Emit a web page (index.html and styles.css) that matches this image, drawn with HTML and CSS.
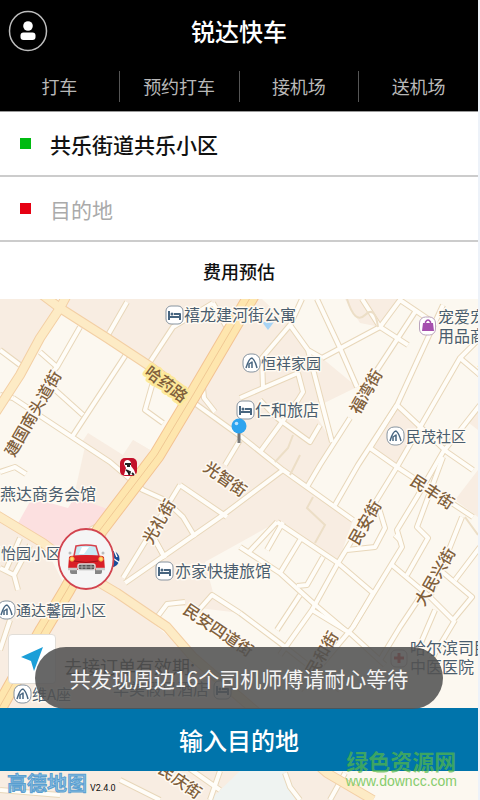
FILE: index.html
```
<!DOCTYPE html>
<html lang="zh-CN">
<head>
    <meta charset="UTF-8">
    <meta name="viewport" content="width=device-width, initial-scale=1.0">
    <title>锐达快车</title>
    <link rel="stylesheet" href="styles.css">
</head>
<body>
    <div class="app">
        <header class="header">
            <div class="title-bar">
                <button class="profile" aria-label="个人中心">
                    <svg width="40" height="42" viewBox="0 0 40 42">
                        <ellipse cx="20" cy="21" rx="18.500" ry="19.500" fill="none" stroke="#bdbdbd" stroke-width="1.500"/>
                        <circle cx="20" cy="16" r="4.800" fill="#fff"/>
                        <rect x="12.500" y="22.500" width="15" height="7.500" rx="3" fill="#fff"/>
                    </svg>
                </button>
                <h1>锐达快车</h1>
            </div>
            <nav class="tabs">
                <button>打车</button>
                <button>预约打车</button>
                <button>接机场</button>
                <button>送机场</button>
            </nav>
        </header>

        <form class="trip">
            <div class="field">
                <label class="dot start" for="from" aria-label="出发地"></label>
                <input id="from" type="text" value="共乐街道共乐小区">
            </div>
            <div class="field">
                <label class="dot end" for="to" aria-label="目的地"></label>
                <input id="to" type="text" placeholder="目的地">
            </div>
            <button type="button" class="estimate">费用预估</button>
        </form>

        <main class="map">
            <svg class="map-canvas" viewBox="0 299 478 501" preserveAspectRatio="xMinYMin slice">
                <defs>
                    <g id="streets">
                        <path d="M0 350 20 365M80 327 57 367 40 352M57 367 50 375M127 302 108 335M213 303 173 327 150 362M213 303 227 328"/>
                        <path d="M127 353 72 437M53 388 83 415M13 398 72 437 110 462 143 490 165 500 183 517 195 537M153 382 145 410 163 423"/>
                        <path d="M193 402 243 438 283 470 353 520M203 388 204 398 215 412"/>
                        <path d="M317 299 340 348 357 387M302 299 290 325 262 358 263 388 298 373M290 325 308 350 332 442M322 358 380 327 408 345M322 358 308 350"/>
                        <path d="M362 299 380 327 400 300 437 325M415 312 377 370M350 418 320 465 307 487M443 305 397 405 358 465 335 505"/>
                        <path d="M480 338 460 358 423 422 397 467 338 563 312 610 280 655M397 405 447 452 473 470M370 448 397 467 473 517"/>
                        <path d="M460 358 480 375M480 405 443 452 417 497 397 530 402 547 353 627 300 690M370 448 397 405"/>
                        <path d="M240 398 263 388M260 452 298 400 303 392 298 373M277 418 310 442 320 425M277 418 260 400"/>
                        <path d="M283 470 223 515 125 583M180 485 227 517M180 485 123 578M155 540 165 558M130 480 143 490"/>
                        <path d="M240 547 280 573 313 603 345 630M277 522 338 563 373 593 353 627M277 522 248 553M300 540 280 573M323 557 307 585 297 586"/>
                        <path d="M378 505 385 528 375 547 347 550M443 457 417 527 428 538 407 575M392 565 430 597 453 620 472 597 440 570"/>
                        <path d="M462 517 430 597M480 547 455 580M420 597 400 627 380 660M240 613 280 643 340 690M300 595 277 630M312 610 350 633 385 665"/>
                        <path d="M155 620 167 604 185 602M197 612 212 595 240 613M435 610 420 645M455 620 425 670M283 522 267 550"/>
                        <path d="M10 620 0 650M0 568 14 575 18 590M5 572 20 538M14 575 30 545M0 472 15 467 26 474M90 530 105 522"/>
                        <path d="M220 771 210 800M170 755 220 790M345 773 330 800M0 790 60 795M120 780 160 800M285 773 290 787 300 800"/>
                        <path d="M240 440 225 465M0 395 13 398M400 540 395 535M165 558 155 540"/>
                    </g>
                    <g id="avenues">
                        <path d="M40 293 60 308 107 338 148 365 190 396"/>
                        <path d="M-4 412 20 375 40 338 60 308 68 293"/>
                        <path d="M-5 514 43 543 83 573 117 593 167 627 193 657 327 773 373 800"/>
                    </g>
                    <path id="expressway" d="M253 293 193 395 157 455 100 530 67 590 43 630 -5 715"/>
                    <g id="pin-home">
                        <rect x="-8" y="-9" width="17" height="18" rx="7" fill="#fff" stroke="#8794a0"/>
                        <path d="M-5 5Q-2-5 1-5Q4-3 6 5M-2 5V1L1-1V5" fill="none" stroke="#476580" stroke-width="1.500"/>
                    </g>
                    <g id="pin-hotel">
                        <rect x="-8" y="-9" width="17" height="18" rx="5" fill="#fff" stroke="#8794a0"/>
                        <path d="M-5-4V5M-5 2H6V5M6 2V-1H0" fill="none" stroke="#476580" stroke-width="2"/>
                        <circle cx="-2" cy="-1" r="1.500" fill="#476580"/>
                    </g>
                </defs>

                <rect y="299" width="478" height="501" fill="#fcf8f0"/>

                <!-- city blocks -->
                <g fill="#f8ede2">
                    <path d="M0 299H50L55 310 22 365 0 352Z"/>
                    <path d="M68 299H262L290 325 308 350 322 358 357 387 312 409 332 442 307 487 353 520 338 563 277 522 205 562 215 600 240 613 167 604 155 620 120 595 67 590 160 455 193 395 60 308Z"/>
                    <path d="M345 299H398L380 327 360 323Z"/>
                    <path d="M397 405 421 423 395 463 372 448ZM478 470 455 500 478 517ZM385 450H405L397 466Z"/>
                    <path d="M88 433 123 455 133 440 150 450 100 530 72 505Z"/>
                    <path d="M0 515 43 543 67 590 117 593 193 657 310 760 373 800H0Z"/>
                    <path d="M478 405 465 420 478 430Z"/>
                </g>
                <path d="M263 299H300L290 325Z" fill="#fcf8f0"/>
                <path d="M193 402 150 362 107 338 60 308 72 437 120 460 133 440 157 450Z" fill="#fcf8f0"/>
                <path d="M88 433 123 455 133 440 150 450 145 465 110 462 80 445Z" fill="#f8ede2"/>
                <path d="M17 525 32 498 68 508 75 497 110 510 85 550 60 553Z" fill="#fce0e0"/>
                <path d="M240 771H284L293 785 295 800H210Z" fill="#eff3f1"/>

                <use href="#streets" class="street-edge"/>
                <use href="#streets" class="street"/>
                <path class="footpath" d="M347 299Q355 325 365 315T378 327M313 497 307 508 325 525 315 543M293 435 288 448 275 462M300 455 290 475M465 517 478 535"/>
                <use href="#avenues" class="avenue-edge"/>
                <use href="#avenues" class="avenue"/>
                <use href="#expressway" class="expressway-edge"/>
                <use href="#expressway" class="expressway"/>
                <use href="#expressway" class="expressway-line"/>

                <!-- street names -->
                <g class="street-name">
                    <text class="highlight" transform="translate(167 383) rotate(37)">哈药路</text>
                    <text transform="translate(32 413) rotate(-60)">建国南头道街</text>
                    <text transform="translate(365 391) rotate(-60)">福湾街</text>
                    <text transform="translate(226 478) rotate(35)">光智街</text>
                    <text transform="translate(158 521) rotate(-60)">光礼街</text>
                    <text transform="translate(433 491) rotate(33)">民丰街</text>
                    <text transform="translate(364 522) rotate(-60)">民安街</text>
                    <text transform="translate(434 576) rotate(-60)">大民兴街</text>
                    <text transform="translate(219 629) rotate(34)">民安四道街</text>
                    <text transform="translate(321 653) rotate(-60)">民和街</text>
                    <text transform="translate(181 780) rotate(35)">民庆街</text>
                    <text transform="translate(484 369) rotate(-60)">大</text>
                </g>

                <!-- places -->
                <path d="M262 322H274L268 330Z" fill="#a8d4f5"/>
                <g class="place">
                    <text x="184" y="321">禧龙建河街公寓</text>
                    <text x="255" y="416">仁和旅店</text>
                    <text x="438" y="323">宠爱宠物</text>
                    <text x="438" y="342">用品商店</text>
                    <text x="0" y="500">燕达商务会馆</text>
                    <text x="175" y="577">亦家快捷旅馆</text>
                    <text x="410" y="654">哈尔滨司民</text>
                    <text x="410" y="673">中医医院</text>
                    <text x="113" y="695">华美假日酒店</text>
                </g>
                <g class="place small">
                    <text x="261" y="369">恒祥家园</text>
                    <text x="406" y="442">民茂社区</text>
                    <text x="-14" y="559">阳怡园小区</text>
                    <text x="16" y="616">通达馨园小区</text>
                    <text x="32" y="700">维A座</text>
                </g>
                <use href="#pin-hotel" x="174" y="315"/>
                <use href="#pin-home" x="251" y="363"/>
                <use href="#pin-hotel" x="245" y="410"/>
                <use href="#pin-home" x="395" y="436"/>
                <use href="#pin-hotel" x="164" y="571"/>
                <use href="#pin-home" x="6" y="610"/>
                <use href="#pin-home" x="22" y="694"/>
                <use href="#pin-hotel" x="222" y="690"/>

                <!-- shop -->
                <rect x="419.500" y="317" width="16" height="18" rx="6" fill="#fff" stroke="#b9a3bd"/>
                <path d="M423 323H433L434 331H422Z" fill="#a54fae"/>
                <path d="M425.500 324V322Q428 318 430.500 322V324" fill="none" stroke="#a54fae" stroke-width="1.500"/>
                <!-- hospital -->
                <rect x="391" y="650" width="16" height="17" rx="5" fill="#fff" stroke="#b9a9a4"/>
                <path d="M399 653V663M394 658H404" stroke="#d33" stroke-width="3"/>
                <!-- fried chicken -->
                <rect x="120" y="458" width="17" height="18" rx="5" fill="#c3102a"/>
                <path d="M124 475 126 468 124 464Q124 460 128 460 132 461 131 466L134 470 136 475Z" fill="#fff"/>
                <path d="M125 464H131M127 466H130M126 470 130 472 129 475M132 473 134 475" stroke="#222" stroke-width="1.800"/>
                <!-- bank -->
                <circle cx="111" cy="559" r="8.500" fill="#174c98"/>
                <path d="M111 557 120 563M114 550 117 557" stroke="#fff" stroke-width="1.500"/>

                <!-- pick-up pin -->
                <path d="M239 428V443" stroke="#777" stroke-width="3"/>
                <circle cx="239" cy="426" r="7.500" fill="#2fa4ef"/>
                <circle cx="236.500" cy="423.500" r="1.800" fill="#bfe4ff"/>

                <!-- driver -->
                <ellipse cx="86" cy="559" rx="27.500" ry="30" fill="#f5f5f5" stroke="#d2444f" stroke-width="1.800"/>
                <path d="M70 568H77V574H72Q70 574 70 572ZM95 568H102V572Q102 574 100 574H95Z" fill="#858585"/>
                <path d="M74 556 76 546Q86 544 96 546L99 556Z" fill="#c9ebf5" stroke="#d7404a" stroke-width="1.500"/>
                <path d="M79 554 82 547H89L84 554Z" fill="#fff"/>
                <path d="M69 557Q71 555 75 556 86 554 98 556 102 555 104 557L105 570H68Z" fill="#d91f27"/>
                <path d="M74 561Q86 564 98 561" fill="none" stroke="#9e1219"/>
                <circle cx="70" cy="553" r="1.500" fill="#bbb"/>
                <circle cx="103" cy="553" r="1.500" fill="#bbb"/>
                <circle cx="72" cy="559" r="2.200" fill="#ffdb76" stroke="#f3a23a"/>
                <circle cx="101" cy="559" r="2.200" fill="#ffdb76" stroke="#f3a23a"/>
                <rect x="78" y="564" width="17" height="6" rx="2" fill="#555" stroke="#ddd" stroke-width="1.500"/>
                <path d="M82 564V570M86 564V570M91 564V570M78 567H94" stroke="#bbb" stroke-width=".8"/>
                <path d="M68 569H77M96 569H105" stroke="#ccc" stroke-width="2.500"/>
            </svg>

            <button class="locate" aria-label="定位">
                <svg width="24" height="26" viewBox="0 0 24 26">
                    <path d="M23 1 1 11 11 15 14 25Z" fill="#1b9fd8"/>
                </svg>
            </button>
            <p class="order-hint">去接订单有效期:</p>
            <div class="toast" role="status">共发现周边16个司机师傅请耐心等待</div>
            <button class="submit">输入目的地</button>
            <div class="map-credit">
                <strong>高德地图</strong>
                <span>V2.4.0</span>
            </div>
            <a class="watermark" href="#">
                <strong>绿色资源网</strong>
                <span>www.downcc.com</span>
            </a>
        </main>
    </div>
</body>
</html>
```

FILE: styles.css
```
* {
    box-sizing: border-box;
}

body {
    margin: 0;
    background-color: #edf2f9;
    color: #111;
    font-family: "Noto Sans CJK SC", "Noto Sans", sans-serif;
}

button,
input {
    font: inherit;
    color: inherit;
    border: none;
    padding: 0;
    background: none;
}

button {
    cursor: pointer;
}

.app {
    display: flex;
    flex-direction: column;
    min-height: 100vh;
    margin-right: 2px;
    background-color: #fff;
}

/* header */
.header {
    background-color: #000;
    color: #fff;
    border-bottom: 1px solid #999;
}

.title-bar {
    display: grid;
    grid-template-columns: 48px 1fr 48px;
    align-items: center;
    height: 62px;
}

.profile {
    display: flex;
    justify-content: flex-end;
}

h1 {
    margin: 0;
    font-size: 24px;
    line-height: 36px;
    font-weight: 500;
    text-align: center;
}

.tabs {
    display: flex;
    padding: 9px 0;
}

.tabs button {
    flex: 1;
    height: 31px;
    border-right: 1px solid #555;
    font-size: 18px;
    line-height: 31px;
    color: #b8b8b8;
}

.tabs button:last-child {
    border-right: none;
}

/* trip form */
.field {
    display: flex;
    align-items: center;
    gap: 19px;
    height: 65px;
    padding: 0 20px;
    border-bottom: 2px solid #ccc;
}

.dot {
    width: 11px;
    height: 11px;
}

.start {
    background-color: #0b1;
}

.end {
    background-color: #e60012;
}

.field input {
    flex: 1;
    min-width: 0;
    font-size: 21px;
    line-height: 32px;
    font-weight: 500;
    outline: none;
}

.field input::placeholder {
    color: #aaa;
    font-weight: 400;
}

.estimate {
    display: block;
    width: 100%;
    height: 57px;
    font-size: 18px;
    font-weight: 500;
}

/* map */
.map {
    position: relative;
    flex: 1;
    min-height: 500px;
    overflow: hidden;
}

.map-canvas {
    position: absolute;
    width: 100%;
    height: 100%;
}

.map-canvas use {
    stroke-linejoin: round;
}

.street-edge,
.street,
.avenue-edge,
.avenue,
.expressway-edge,
.expressway,
.expressway-line,
.footpath {
    fill: none;
}

.street-edge {
    stroke: #e8d7ba;
    stroke-width: 6px;
}

.street {
    stroke: #fffdf8;
    stroke-width: 4px;
}

.footpath {
    stroke: #ecdec6;
    stroke-width: 2px;
}

.avenue-edge {
    stroke: #f3cfa4;
    stroke-width: 10px;
}

.avenue {
    stroke: #fdebc5;
    stroke-width: 8px;
}

.expressway-edge {
    stroke: #f3c392;
    stroke-width: 16px;
}

.expressway {
    stroke: #fee6ae;
    stroke-width: 14px;
}

.expressway-line {
    stroke: #f0c894;
    stroke-width: 1px;
}

.street-name text,
.place text {
    paint-order: stroke;
    stroke: #fffaf2;
    stroke-width: 3px;
    stroke-linejoin: round;
}

.street-name {
    fill: #80603c;
    font-size: 16px;
    font-weight: 500;
    text-anchor: middle;
    dominant-baseline: central;
}

.street-name .highlight {
    stroke: #fde99a;
    stroke-width: 5px;
}

.place {
    fill: #4a5d6e;
    font-size: 16px;
}

.place.small {
    font-size: 15px;
}

/* overlays */
.locate {
    position: absolute;
    left: 8px;
    bottom: 116px;
    display: flex;
    align-items: center;
    justify-content: center;
    width: 48px;
    height: 50px;
    border: 1px solid #e2ded8;
    border-radius: 4px;
    background-color: #fff;
}

.order-hint {
    position: absolute;
    left: 64px;
    bottom: 119px;
    margin: 0;
    color: #222;
    font-size: 18px;
    line-height: 30px;
}

.submit {
    position: absolute;
    left: 0;
    right: 0;
    bottom: 29px;
    height: 63px;
    background-color: #0074ab;
    color: #fff;
    font-size: 24px;
    font-weight: 500;
}

.toast {
    position: absolute;
    left: 35px;
    right: 35px;
    bottom: 91px;
    z-index: 1;
    height: 62px;
    border-radius: 31px;
    background-color: rgba(82, 82, 82, 0.88);
    color: #f4f4f4;
    font-size: 21px;
    line-height: 62px;
    text-align: center;
    white-space: nowrap;
}

.map-credit {
    position: absolute;
    left: 7px;
    bottom: 0;
    display: flex;
    align-items: baseline;
    gap: 3px;
    line-height: 24px;
}

.map-credit strong {
    color: #8fc3e8;
    font-size: 20px;
    font-weight: 500;
    -webkit-text-stroke: 1px #5a9fd0;
}

.map-credit span {
    font-family: Roboto, sans-serif;
    font-size: 9px;
}

.watermark {
    position: absolute;
    right: 21px;
    bottom: 11px;
    display: flex;
    flex-direction: column;
    align-items: center;
    color: #56b947;
    text-decoration: none;
}

.watermark strong {
    font-size: 22px;
    line-height: 26px;
    font-weight: 700;
    opacity: 0.7;
}

.watermark span {
    font-family: "Liberation Sans", sans-serif;
    font-size: 14px;
    line-height: 16px;
    color: #86cc6c;
}
```
